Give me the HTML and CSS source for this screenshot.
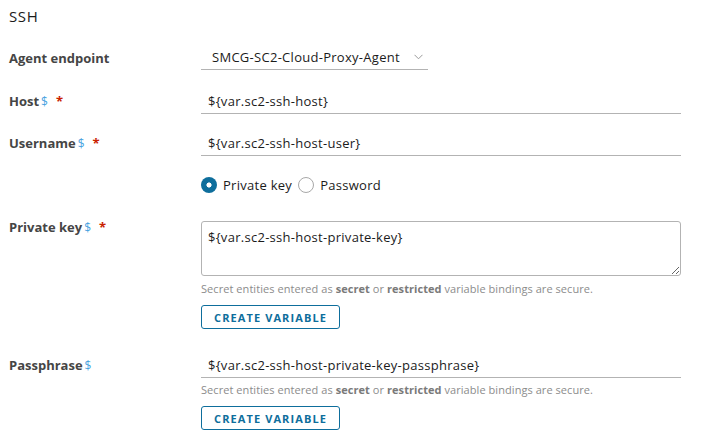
FILE: index.html
```html
<!DOCTYPE html>
<html>
<head>
<meta charset="utf-8">
<link rel="stylesheet" href="styles.css">
</head>
<body>
<div class="page">
  <h2 class="title">SSH</h2>
  <form class="form">
    <div class="row row-agent">
      <label class="label">Agent endpoint</label>
      <div class="control">
        <div class="select">
          <span class="select-text">SMCG-SC2-Cloud-Proxy-Agent</span>
          <svg class="chev" width="9" height="6" viewBox="0 0 9 6"><path d="M0.5 0.8 L4.5 4.8 L8.5 0.8" fill="none" stroke="#9a9a9a" stroke-width="1"/></svg>
        </div>
      </div>
    </div>
    <div class="row row-host">
      <label class="label">Host<span class="dollar">$</span><span class="req">*</span></label>
      <div class="control"><div class="input">${var.sc2-ssh-host}</div></div>
    </div>
    <div class="row row-user">
      <label class="label">Username<span class="dollar">$</span><span class="req">*</span></label>
      <div class="control"><div class="input">${var.sc2-ssh-host-user}</div></div>
    </div>
    <div class="row row-radio">
      <span class="label"></span>
      <div class="control radios">
        <span class="radio checked"></span><span class="radio-label">Private key</span>
        <span class="radio"></span><span class="radio-label">Password</span>
      </div>
    </div>
    <div class="row row-key">
      <label class="label label-top">Private key<span class="dollar">$</span><span class="req">*</span></label>
      <div class="control">
        <textarea class="textarea">${var.sc2-ssh-host-private-key}</textarea>
        <p class="helper">Secret entities entered as <b>secret</b> or <b>restricted</b> variable bindings are secure.</p>
        <button type="button" class="btn">CREATE VARIABLE</button>
      </div>
    </div>
    <div class="row row-pass">
      <label class="label">Passphrase<span class="dollar">$</span></label>
      <div class="control">
        <div class="input">${var.sc2-ssh-host-private-key-passphrase}</div>
        <p class="helper">Secret entities entered as <b>secret</b> or <b>restricted</b> variable bindings are secure.</p>
        <button type="button" class="btn">CREATE VARIABLE</button>
      </div>
    </div>
  </form>
</div>
</body>
</html>
```

FILE: styles.css
```css
* { box-sizing: border-box; }
html, body { margin: 0; padding: 0; background: #fff; }
body {
  font-family: "Open Sans", "Noto Sans", sans-serif;
  color: #1b1b1b;
}
.page { padding: 6px 25px 0 9px; }
.title {
  margin: 0;
  font-size: 15px;
  font-weight: 400;
  line-height: 20px;
  letter-spacing: 0.6px;
  color: #1b1b1b;
}
.form { display: flex; flex-direction: column; }
.row {
  display: grid;
  grid-template-columns: 192px 1fr;
  align-items: center;
}
.label {
  font-size: 13px;
  line-height: 18px;
  font-weight: 700;
  color: #454545;
  display: flex;
  align-items: baseline;
}
.dollar {
  color: #4aa3df;
  font-weight: 400;
  font-size: 12px;
  margin-left: 2px;
}
.req {
  color: #c92100;
  font-weight: 700;
  margin-left: 8px;
  font-size: 13px;
}
.row-agent { margin-top: 19px; }
.row-host { margin-top: 19px; }
.row-user { margin-top: 17px; }
.row-radio { margin-top: 21px; }
.row-key { margin-top: 28px; align-items: start; }
.row-key .label { margin-top: -3px; }
.row-pass { margin-top: 24px; align-items: start; }
.row-pass .label { margin-top: 3px; }

.select {
  width: 227px;
  height: 25px;
  border-bottom: 1px solid #b3b3b3;
  display: flex;
  align-items: center;
  padding-left: 11px;
  font-size: 13px;
  letter-spacing: 0.28px;
  color: #1b1b1b;
}
.chev { margin-left: 14px; }
.input {
  height: 25px;
  border-bottom: 1px solid #b3b3b3;
  display: flex;
  align-items: center;
  padding-left: 7px;
  font-size: 13px;
  letter-spacing: 0.28px;
  color: #1b1b1b;
}
.radios { display: flex; align-items: center; height: 16px; }
.radio {
  width: 16px; height: 16px;
  border-radius: 50%;
  border: 1px solid #a8a8a8;
  display: inline-block;
  background: #fff;
}
.radio.checked {
  border: none;
  background: radial-gradient(circle, #fff 0 2.3px, #0e6e9c 2.8px);
}
.radio-label { font-size: 13px; letter-spacing: 0.28px; margin-left: 6px; margin-right: 6px; color: #1b1b1b; }
.textarea {
  display: block;
  width: 100%;
  height: 55px;
  border: 1px solid #b3b3b3;
  border-radius: 3px;
  padding: 6px 6px;
  font-family: inherit;
  font-size: 13px;
  letter-spacing: 0.28px;
  color: #1b1b1b;
  resize: vertical;
  margin: 0;
}
.helper {
  margin: 6px 0 0;
  font-size: 11px;
  line-height: 14px;
  letter-spacing: 0.06px;
  color: #8c8c8c;
}
.helper b { color: #7a7a7a; }
.btn {
  margin-top: 9px;
  height: 24px;
  width: 139px;
  border: 1px solid #0e6e9c;
  border-radius: 3px;
  background: #fff;
  color: #0e6e9c;
  font-family: inherit;
  font-size: 11px;
  font-weight: 700;
  letter-spacing: 1.1px;
  padding: 0;
  display: flex;
  align-items: center;
  justify-content: center;
}
.row-pass .helper { margin-top: 5px; }
.row-pass .btn { margin-top: 9px; }
```
